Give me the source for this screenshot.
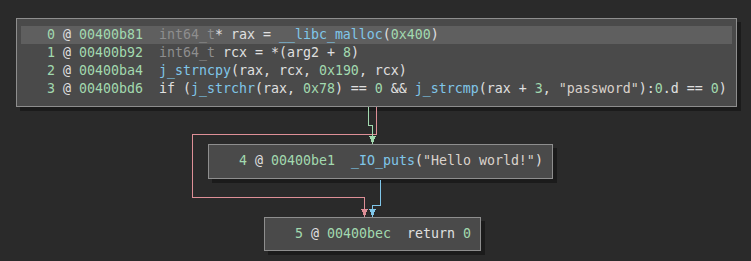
type Tok = [string, string];

const C = {
  num: 'text-[#a2d9af]',
  txt: 'text-[#e0e0e0]',
  type: 'text-[#8e8e8e]',
  fn: 'text-[#80c6e9]',
  str: 'text-[#dad2cc]',
};

function Line({ idx, addr, toks, hl }: { idx: number; addr: string; toks: Tok[]; hl?: boolean }) {
  return (
    <div className={`h-[18px] leading-[18px] pl-[2px] whitespace-pre ${hl ? 'bg-[#5f5f5f]' : ''}`}>
      <span className={C.num}>{`   ${idx}`}</span>
      <span className={C.txt}> @ </span>
      <span className={C.num}>{addr}</span>
      <span>{'  '}</span>
      {toks.map(([cls, t], i) => (
        <span key={i} className={cls}>
          {t}
        </span>
      ))}
    </div>
  );
}

function Node({ className, children }: { className: string; children: React.ReactNode }) {
  return (
    <div
      className={`absolute border border-[#8e8e8e] bg-[#4a4a4a] px-[4px] pt-[7px] shadow-[4px_4px_0_#1b1b1b] ${className}`}
    >
      {children}
    </div>
  );
}

export default function App() {
  return (
    <div
      className="relative w-[751px] h-[261px] overflow-hidden bg-[#2a2a2a] text-[13.29px]"
      style={{ fontFamily: '"DejaVu Sans Mono", "Liberation Mono", monospace' }}
    >
      <Node className="left-[16px] top-[18px] w-[721px] h-[89px]">
        <Line
          idx={0}
          addr="00400b81"
          hl
          toks={[
            [C.type, 'int64_t'],
            [C.txt, '* rax = '],
            [C.fn, '__libc_malloc'],
            [C.txt, '('],
            [C.num, '0x400'],
            [C.txt, ')'],
          ]}
        />
        <Line
          idx={1}
          addr="00400b92"
          toks={[
            [C.type, 'int64_t'],
            [C.txt, ' rcx = *(arg2 + '],
            [C.num, '8'],
            [C.txt, ')'],
          ]}
        />
        <Line
          idx={2}
          addr="00400ba4"
          toks={[
            [C.fn, 'j_strncpy'],
            [C.txt, '(rax, rcx, '],
            [C.num, '0x190'],
            [C.txt, ', rcx)'],
          ]}
        />
        <Line
          idx={3}
          addr="00400bd6"
          toks={[
            [C.txt, 'if ('],
            [C.fn, 'j_strchr'],
            [C.txt, '(rax, '],
            [C.num, '0x78'],
            [C.txt, ') == '],
            [C.num, '0'],
            [C.txt, ' && '],
            [C.fn, 'j_strcmp'],
            [C.txt, '(rax + '],
            [C.num, '3'],
            [C.txt, ', '],
            [C.str, '"password"'],
            [C.txt, '):'],
            [C.num, '0'],
            [C.txt, '.d == '],
            [C.num, '0'],
            [C.txt, ')'],
          ]}
        />
      </Node>

      <Node className="left-[208px] top-[144px] w-[345px] h-[35px]">
        <Line
          idx={4}
          addr="00400be1"
          toks={[
            [C.fn, '_IO_puts'],
            [C.txt, '('],
            [C.str, '"Hello world!"'],
            [C.txt, ')'],
          ]}
        />
      </Node>

      <Node className="left-[264px] top-[217px] w-[217px] h-[34px]">
        <Line
          idx={5}
          addr="00400bec"
          toks={[
            [C.txt, 'return '],
            [C.num, '0'],
          ]}
        />
      </Node>

      <svg className="absolute inset-0 pointer-events-none" width={751} height={261} shapeRendering="crispEdges">
        <path d="M376.5 107 V134.5 H192.5 V197.5 H364.5 V210" fill="none" stroke="#de8f97" />
        <polygon points="361,209 368,209 364.5,217" fill="#de8f97" />
        <path d="M368.5 107 V125.5 H372.5 V137" fill="none" stroke="#a2d9af" />
        <polygon points="369,136 376,136 372.5,144" fill="#a2d9af" />
        <path d="M380.5 180 V205.5 H372.5 V210" fill="none" stroke="#80c6e9" />
        <polygon points="369,209 376,209 372.5,217" fill="#80c6e9" />
      </svg>
    </div>
  );
}
